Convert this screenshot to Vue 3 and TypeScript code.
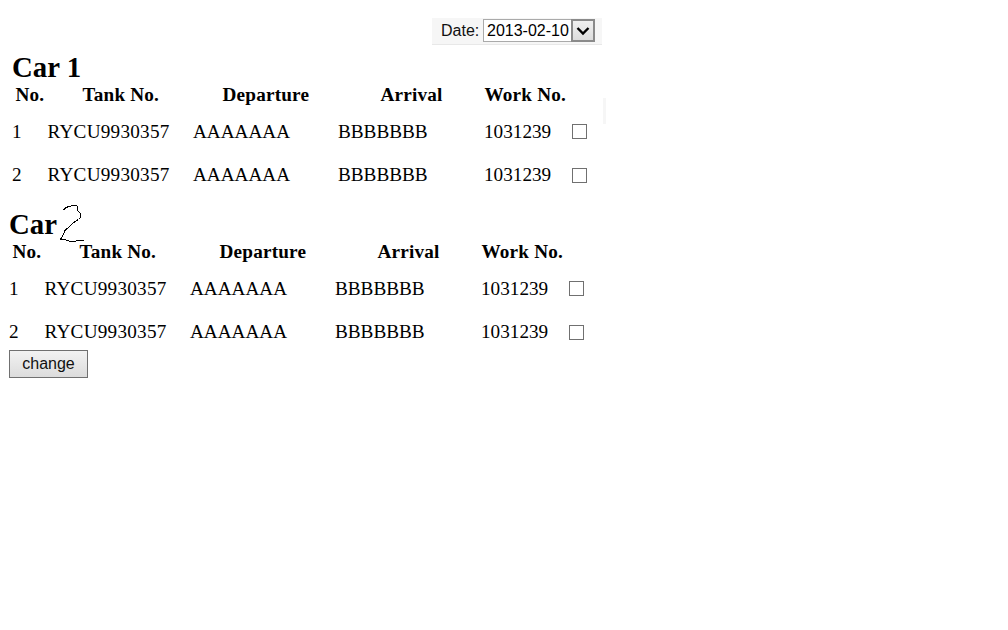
<template>
  <div class="page">
    <div class="date-row">
      <div class="date-bar">
        <label class="date-label">Date:</label>
        <div class="select-wrap">
          <select class="date-select">
            <option>2013-02-10</option>
          </select>
          <span class="select-arrow">
            <svg width="14" height="10" viewBox="0 0 14 10">
              <path d="M1.5 2 L7 7.5 L12.5 2" fill="none" stroke="#000" stroke-width="2.4" />
            </svg>
          </span>
        </div>
      </div>
    </div>

    <section v-for="car in cars" :key="car.id" class="car" :class="car.cls">
      <h2 class="car-title">
        Car<span v-if="car.id === 1"> 1</span>
        <svg v-else class="hand-two" width="27" height="38" viewBox="0 0 27 38" shape-rendering="crispEdges">
          <path
            d="M5.5 5.5 L6.5 3.5 L9.5 2 L14.5 .5 L19 1 L19.5 5.5 L22.5 8.5 L22.5 12.5 L20.5 14.5 L17 16.5 L12 21 L7 25.5 L4.5 31 L2.5 34.5 L7 34.5 L12 36.5 L17 36.5 L21 35 L25.5 35"
            fill="none"
            stroke="#000"
            stroke-width="1"
          />
        </svg>
      </h2>
      <div class="head-row">
        <b>No.</b>
        <b>Tank No.</b>
        <b>Departure</b>
        <b>Arrival</b>
        <b>Work No.</b>
      </div>
      <div class="rows">
        <div v-for="row in rows" :key="row" class="data-row">
          <span>{{ row }}</span>
          <span class="tank">RYCU9930357</span>
          <span>AAAAAAA</span>
          <span>BBBBBBB</span>
          <span>1031239</span>
          <input type="checkbox" class="check" />
        </div>
      </div>
      <span v-if="car.id === 1" class="edge-mark"></span>
    </section>

    <button class="change-btn">change</button>
  </div>
</template>

<script setup lang="ts">
const cars = [
  { id: 1, cls: 'car-first' },
  { id: 2, cls: 'car-second' },
]
const rows: number[] = [1, 2]
</script>

<style>
html,
body {
  background: #fff;
}
</style>

<style scoped>
.page {
  width: 1008px;
  height: 630px;
  overflow: hidden;
  font-family: 'Liberation Serif', 'Times New Roman', serif;
  font-size: 19.2px;
  color: #000;
  padding-top: 18px;
  box-sizing: border-box;
}

.date-row {
  display: flex;
  padding-left: 432px;
}

.date-bar {
  width: 170px;
  height: 27px;
  box-sizing: border-box;
  background: #f6f6f6;
  border-bottom: 1px solid #e8e8e8;
  display: flex;
  align-items: flex-start;
  padding: 1px 0 0 9px;
  font-family: 'Liberation Sans', Arial, sans-serif;
  font-size: 16px;
}

.date-label {
  width: 42px;
  line-height: 24px;
  color: #111;
}

.select-wrap {
  position: relative;
  width: 112px;
  height: 23px;
}

.date-select {
  appearance: none;
  width: 100%;
  height: 100%;
  box-sizing: border-box;
  border: 1px solid #aaa;
  border-radius: 0;
  background: #fff;
  padding: 0 0 0 3px;
  font-family: inherit;
  font-size: 16px;
  color: #000;
}

.select-arrow {
  position: absolute;
  right: 0;
  top: 0;
  width: 24px;
  height: 23px;
  box-sizing: border-box;
  border: 2px solid #8a8a8a;
  background: linear-gradient(#f0f0f0, #dcdcdc);
  display: flex;
  align-items: center;
  justify-content: center;
}

.car {
  position: relative;
}

.car-first {
  padding-left: 12px;
  height: 137px;
  padding-top: 6px;
}

.car-second {
  padding-left: 9px;
  margin-top: 20px;
}

.car-title {
  margin: 0;
  font-size: 28.8px;
  line-height: 33px;
  font-weight: bold;
  height: 32px;
  position: relative;
}

.hand-two {
  position: absolute;
  left: 49px;
  top: -3px;
}

.head-row {
  display: grid;
  grid-template-columns: 67px 140px 158px 104px auto;
  height: 24px;
  line-height: 24px;
  padding-left: 3.5px;
  white-space: nowrap;
  letter-spacing: 0.2px;
}

.rows {
  padding-top: 3px;
}

.data-row {
  display: grid;
  grid-template-columns: 35.5px 145.5px 145px 146px 88px 15px;
  align-items: center;
  height: 43.5px;
  white-space: nowrap;
}

.tank {
  letter-spacing: 0.25px;
}

.check {
  appearance: none;
  width: 15px;
  height: 15px;
  margin: 0;
  box-sizing: border-box;
  border: 1px solid #707070;
  background: #fff;
  border-radius: 0;
}

.edge-mark {
  position: absolute;
  left: 603px;
  top: 53px;
  width: 3px;
  height: 26px;
  background: #f6f6f6;
}

.change-btn {
  display: block;
  margin: -4px 0 0 9px;
  width: 79px;
  height: 28px;
  box-sizing: border-box;
  border: 1px solid #707070;
  border-radius: 0;
  background: linear-gradient(#f2f2f2, #dcdcdc);
  font-family: 'Liberation Sans', Arial, sans-serif;
  font-size: 16px;
  color: #111;
  padding: 0;
}
</style>
